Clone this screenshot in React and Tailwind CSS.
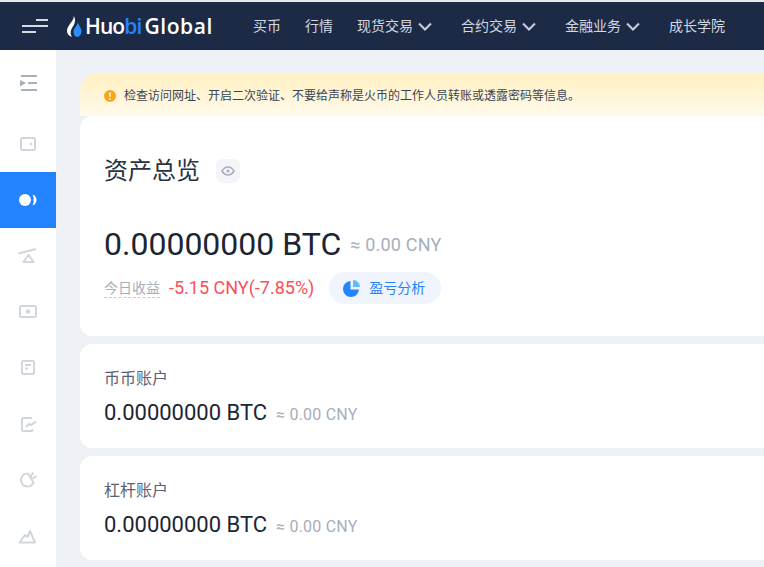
import { Fragment } from 'react';

const font = "font-['Roboto','Noto_Sans_CJK_SC',sans-serif]";

function Chevron() {
  return (
    <svg width="14" height="9" viewBox="0 0 14 9" fill="none" stroke="#c9d0dc" strokeWidth="2">
      <path d="M1 1.500 7 7.500l6-6" />
    </svg>
  );
}

function NavItem({ label, menu, className }) {
  return (
    <div className={`flex items-center gap-[5px] text-[14px] leading-[20px] text-[#d3d8e1] ${className}`}>
      <span>{label}</span>
      {menu && <Chevron />}
    </div>
  );
}

function Logo() {
  return (
    <div className="flex items-center">
      <svg width="15" height="21" viewBox="0 0 15 21" className="mr-[3px]">
        <path d="M6.500 0C8 4 0 9 0 15c0 3 2 5 5 6-1.500-2-2-5-.5-8C6 10 10.500 5 6.500 0z" fill="#fff" />
        <path d="M11 6c0 3-4.500 6-4.500 10 0 3 2 5 4 5 2.500-.5 4-3 4-5.500C14.500 11.500 11.500 10 11 6z" fill="#2b8dff" />
      </svg>
      <span className="text-[21px] leading-[26px] font-semibold text-white font-['Open_Sans',sans-serif] tracking-[-0.9px]">
        Huo<span className="text-[#2483ff]">bi</span>
      </span>
      <span className="ml-[3px] text-[21px] leading-[26px] font-semibold text-white font-['Open_Sans',sans-serif] tracking-[0.6px]">Global</span>
    </div>
  );
}

const stroke = { fill: 'none', stroke: '#d0d5de', strokeWidth: 2 };

const sideIcons = [
  <Fragment>
    <rect x="3" y="3" width="14" height="12" rx="1.500" {...stroke} />
    <circle cx="13" cy="9" r="1.200" fill="#d0d5de" />
  </Fragment>,
  null,
  <Fragment>
    <path d="M.5 6.500 18 2" {...stroke} />
    <path d="M10.500 8l5 7h-10z" {...stroke} strokeLinejoin="round" />
  </Fragment>,
  <Fragment>
    <rect x="2" y="3" width="16" height="11" rx="1.500" {...stroke} />
    <circle cx="10" cy="8.500" r="2.200" fill="#d0d5de" />
  </Fragment>,
  <Fragment>
    <rect x="4" y="2" width="12" height="13" rx="1.500" {...stroke} />
    <path d="M7 6h6M7 9.500h3" {...stroke} />
  </Fragment>,
  <Fragment>
    <path d="M14 3H5.500A1.500 1.500 0 0 0 4 4.500v10A1.500 1.500 0 0 0 5.500 16H13a1.500 1.500 0 0 0 1.500-1.500V14" {...stroke} />
    <path d="M8 12l3-3 2 1 5-3.500" {...stroke} />
  </Fragment>,
  <Fragment>
    <path d="M10 2.500a6.500 6.500 0 1 0 5.500 9z" {...stroke} strokeLinejoin="round" />
    <path d="M12.500 6 15 1.500M14.500 7.500l4-2.500" {...stroke} />
  </Fragment>,
  <Fragment>
    <path d="M1.500 15.500 7 8l2.500 2L12 4l5 11.500z" {...stroke} strokeLinejoin="round" />
  </Fragment>,
];

function Sidebar() {
  return (
    <aside className="w-14 shrink-0 bg-white">
      <div className="h-[66px] flex items-center justify-center">
        <svg width="18" height="18" viewBox="0 0 18 18" fill="#a9afbc">
          <path d="M2 1h16v2H2zM1 6l6 3-6 3.500zM9 8h9v2H9zM2 15h16v2H2z" />
        </svg>
      </div>
      {sideIcons.map((icon, i) =>
        i === 1 ? (
          <div key={i} className="h-14 bg-[#2483ff] flex items-center justify-center">
            <svg width="20" height="14" viewBox="0 0 20 14" fill="#fff">
              <circle cx="7" cy="7" r="6" />
              <path d="M14.500 1.500c2.500.5 4 3 4 5.500s-1.500 5-4 5.500c.8-1.500 1.200-3.500 1.200-5.500s-.4-4-1.200-5.500z" />
            </svg>
          </div>
        ) : (
          <div key={i} className="h-14 flex items-center justify-center">
            <svg width="20" height="18" viewBox="0 0 20 18">{icon}</svg>
          </div>
        )
      )}
    </aside>
  );
}

function AccountCard({ title }) {
  return (
    <section className="h-[104px] rounded-l-[12px] bg-white pl-6 pt-[25px]">
      <div className="text-[16px] leading-[20px] text-[#5a6272]">{title}</div>
      <div className="mt-[9px] flex items-baseline">
        <span className="text-[22px] leading-[30px] text-[#1c2533]">0.00000000 BTC</span>
        <span className="ml-[9px] text-[16px] tracking-[0.2px] text-[#a6aebd]">≈ 0.00 CNY</span>
      </div>
    </section>
  );
}

export default function App() {
  return (
    <div className={`h-[567px] w-[764px] overflow-hidden bg-[#edf0f5] ${font}`}>
      <div className="h-[2px] bg-[#e8e9ec]" />
      <header className="h-[48px] bg-[#1c2a46] flex items-center">
        <svg width="26" height="16" viewBox="0 0 26 16" fill="#d5d9e0" className="ml-[22px]">
          <path d="M14 1h12v2H14zM0 7h26v2H0zM0 13h14v2H0z" />
        </svg>
        <div className="ml-[19px] w-[186px]"><Logo /></div>
        <nav className="flex items-center">
          <NavItem label="买币" className="w-[52px]" />
          <NavItem label="行情" className="w-[52px]" />
          <NavItem label="现货交易" menu className="w-[104px]" />
          <NavItem label="合约交易" menu className="w-[104px]" />
          <NavItem label="金融业务" menu className="w-[104px]" />
          <NavItem label="成长学院" />
        </nav>
      </header>
      <div className="flex h-[517px]">
        <Sidebar />
        <main className="flex-1 pl-6 pt-6">
          <div className="rounded-tl-[16px] bg-gradient-to-b from-[#fff0c2] to-[#fffaeb] h-[42px] pl-6 pt-[1px] flex items-center">
            <svg width="12" height="12" viewBox="0 0 12 12">
              <circle cx="6" cy="6" r="6" fill="#f9a61a" />
              <path d="M6 2.500v4.200M6 8.200v1.300" stroke="#fff" strokeWidth="1.500" />
            </svg>
            <span className="ml-[8px] text-[12px] leading-[16px] text-[#3b4352]">
              检查访问网址、开启二次验证、不要给声称是火币的工作人员转账或透露密码等信息。
            </span>
          </div>
          <section className="h-[220px] rounded-l-[12px] bg-white pl-6 pt-[38px]">
            <div className="flex items-center">
              <h1 className="text-[24px] leading-[34px] text-[#2a3240]">资产总览</h1>
              <div className="ml-4 size-6 rounded-[6px] bg-[#f3f5f8] flex items-center justify-center">
                <svg width="14" height="10" viewBox="0 0 14 10" fill="none" stroke="#a6aebd" strokeWidth="1.500">
                  <path d="M1 5c1.500-2.500 3.500-4 6-4s4.500 1.500 6 4c-1.500 2.500-3.500 4-6 4S2.500 7.500 1 5z" />
                  <circle cx="7" cy="5" r="1.500" fill="#a6aebd" stroke="none" />
                </svg>
              </div>
            </div>
            <div className="mt-[34px] flex items-center">
              <span className="text-[32px] leading-[44px] text-[#1c2533]">0.00000000 BTC</span>
              <span className="ml-[9px] text-[18px] tracking-[0.2px] text-[#a6aebd]">≈ 0.00 CNY</span>
            </div>
            <div className="mt-[6px] flex items-center">
              <span className="text-[14px] leading-[18px] text-[#a6aebd] border-b border-dashed border-[#c5cad3]">今日收益</span>
              <span className="ml-[9px] text-[18px] leading-[24px] text-[#f9505a]">-5.15 CNY(-7.85%)</span>
              <div className="ml-[15px] h-8 w-[112px] rounded-full bg-[#f0f4fc] flex items-center pl-[14px]">
                <svg width="17" height="17" viewBox="0 0 17 17">
                  <path d="M7.500 1v8.500H16A8 8 0 1 1 7.500 1z" fill="#2483ff" />
                  <path d="M10 0a7 7 0 0 1 7 7h-7z" fill="#5cc0f7" />
                </svg>
                <span className="ml-[9px] text-[14px] text-[#2483ff]">盈亏分析</span>
              </div>
            </div>
          </section>
          <div className="mt-2 flex flex-col gap-2">
            <AccountCard title="币币账户" />
            <AccountCard title="杠杆账户" />
          </div>
        </main>
      </div>
    </div>
  );
}
